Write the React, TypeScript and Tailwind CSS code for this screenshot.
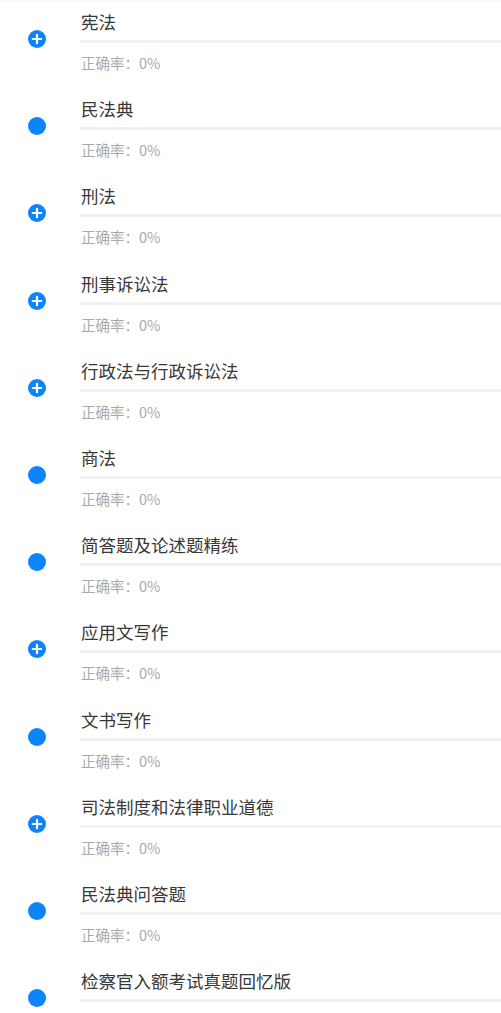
import React from "react";

const items: { name: string; plus: boolean }[] = [
  { name: "宪法", plus: true },
  { name: "民法典", plus: false },
  { name: "刑法", plus: true },
  { name: "刑事诉讼法", plus: true },
  { name: "行政法与行政诉讼法", plus: true },
  { name: "商法", plus: false },
  { name: "简答题及论述题精练", plus: false },
  { name: "应用文写作", plus: true },
  { name: "文书写作", plus: false },
  { name: "司法制度和法律职业道德", plus: true },
  { name: "民法典问答题", plus: false },
  { name: "检察官入额考试真题回忆版", plus: false },
];

function Dot({ plus }: { plus: boolean }) {
  return (
    <svg width="18" height="18" viewBox="0 0 18 18">
      <circle cx="9" cy="9" r="9" fill="#0c84fd" />
      {plus && (
        <path d="M9 4.8v8.4M4.8 9h8.4" stroke="#fff" strokeWidth="2.2" strokeLinecap="round" />
      )}
    </svg>
  );
}

export default function App() {
  return (
    <div
      className="w-[501px] h-[1013px] overflow-hidden bg-white border-t-2 border-[#f7f7f7]"
      style={{ fontFamily: '"Noto Sans CJK SC", "Noto Sans", sans-serif' }}
    >
      <div className="flex flex-col -mt-[2px]">
        {items.map((it) => (
          <div key={it.name} className="flex h-[87.2px] shrink-0">
            <div className="w-[80px] shrink-0 pt-[30px] pl-[28px]">
              <Dot plus={it.plus} />
            </div>
            <div className="flex-1 flex flex-col pt-[10px]">
              <div className="text-[17.5px] leading-[24px] text-[#383838] pl-[1px]">{it.name}</div>
              <div className="mt-[6px] h-[3px] bg-[#f2f2f2]" />
              <div className="mt-[11px] text-[14.5px] leading-[18px] text-[#a9a9a9] pl-[1px]">正确率：0%</div>
            </div>
          </div>
        ))}
      </div>
    </div>
  );
}
